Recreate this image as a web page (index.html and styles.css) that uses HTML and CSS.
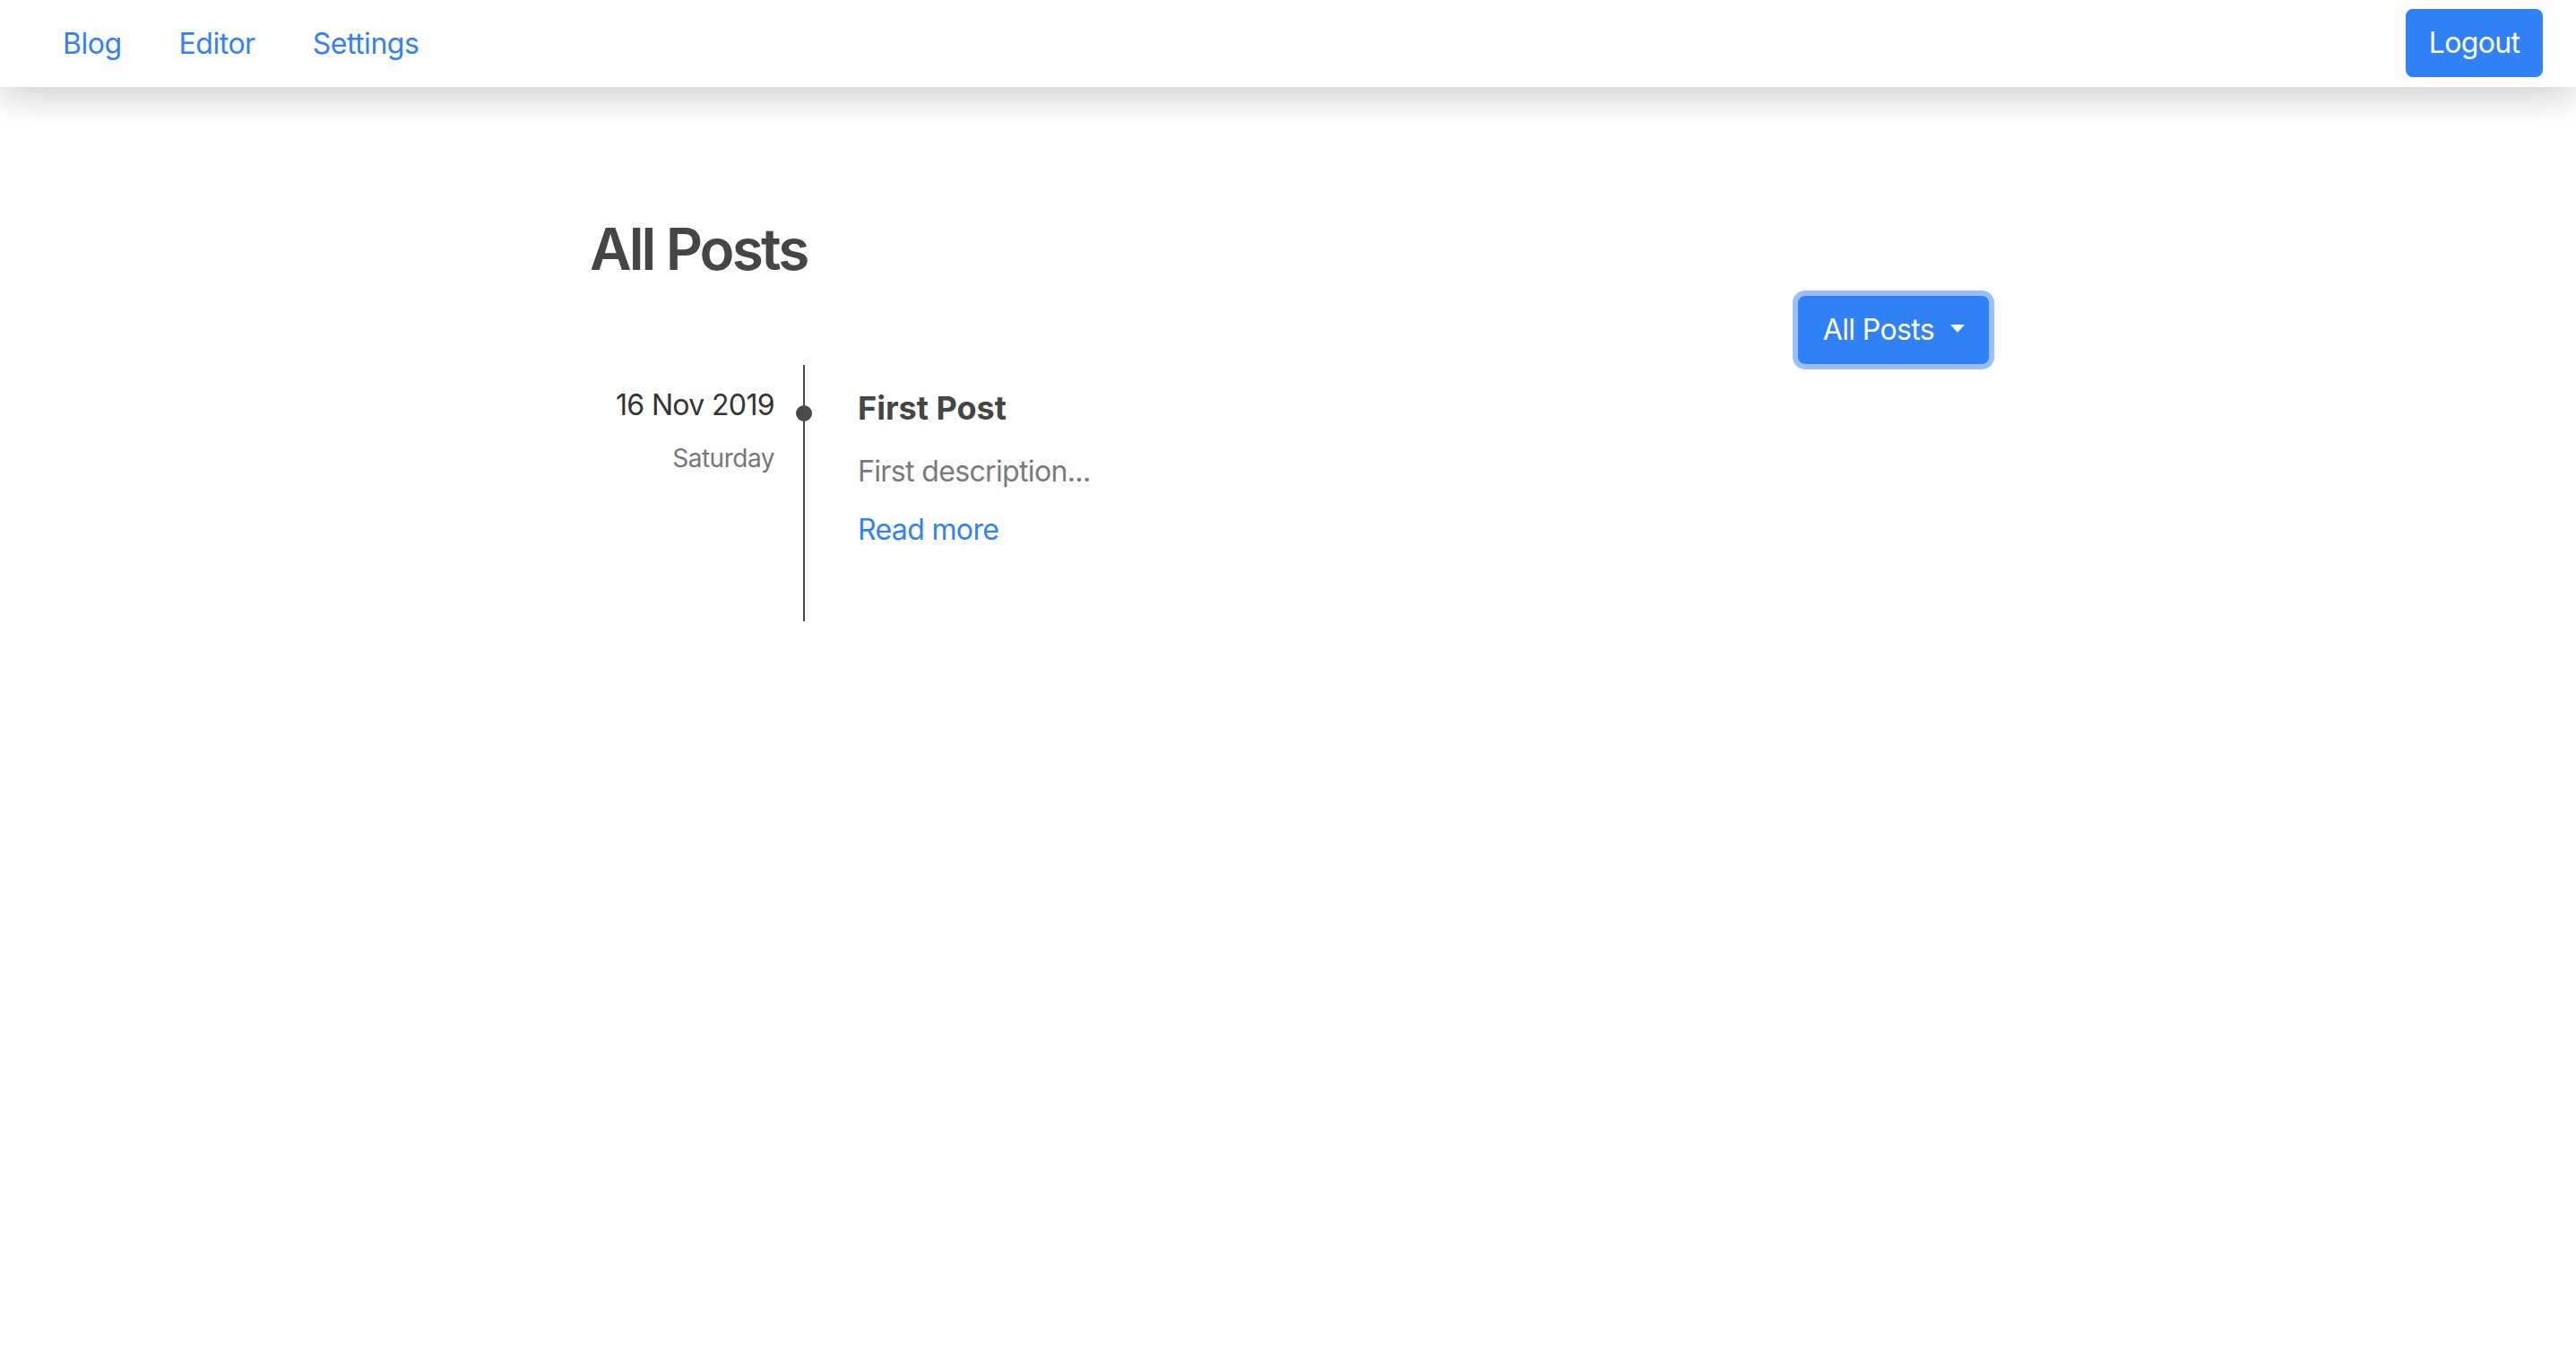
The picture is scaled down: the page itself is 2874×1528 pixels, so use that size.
FILE: index.html
```html
<!DOCTYPE html>
<html lang="en">
<head>
<meta charset="utf-8">
<title>All Posts</title>
<link rel="stylesheet" href="styles.css">
</head>
<body>
<header class="navbar">
  <nav class="nav-links">
    <a class="nav-link" href="#">Blog</a>
    <a class="nav-link" href="#">Editor</a>
    <a class="nav-link" href="#">Settings</a>
  </nav>
  <button class="btn btn-primary logout" type="button">Logout</button>
</header>

<main class="container">
  <h2 class="page-title">All Posts</h2>
  <div class="filter-row">
    <button class="btn btn-primary dropdown-toggle focused" type="button"><span class="btn-label">All Posts</span><span class="caret"></span></button>
  </div>

  <section class="timeline">
    <article class="timeline-item">
      <div class="date-col">
        <div class="date">16 Nov 2019</div>
        <div class="weekday">Saturday</div>
      </div>
      <div class="axis"><span class="dot"></span></div>
      <div class="post">
        <h5 class="post-title">First Post</h5>
        <p class="post-desc">First description...</p>
        <a class="read-more" href="#">Read more</a>
      </div>
    </article>
  </section>
</main>
</body>
</html>
```

FILE: styles.css
```css
* { box-sizing: border-box; }

html, body {
  margin: 0;
  padding: 0;
  background: #ffffff;
}

body {
  font-family: Inter, "Open Sans", "Liberation Sans", sans-serif;
  font-size: 32px;
  line-height: 1.5;
  color: #333333;
  letter-spacing: -0.015em;
}

.navbar {
  height: 97px;
  display: flex;
  align-items: center;
  justify-content: space-between;
  padding: 0 37px 0 38px;
  background: #ffffff;
  box-shadow: 0 10px 40px rgba(0, 0, 0, 0.2);
  position: relative;
  z-index: 1;
}

.nav-links {
  display: flex;
  align-items: center;
}

.nav-link {
  color: #3381f6;
  text-decoration: none;
  padding: 0 32px;
  line-height: 48px;
  font-size: 32px;
}

.btn {
  font-family: inherit;
  font-size: 32px;
  line-height: 48px;
  letter-spacing: -0.02em;
  border: 2px solid transparent;
  border-radius: 8px;
  padding: 12px 25px;
  cursor: pointer;
  white-space: nowrap;
}

.btn-primary {
  background: #3181f6;
  border-color: #3181f6;
  color: #ffffff;
}

.logout {
  height: 76px;
  width: 153px;
  padding: 12px 0;
  margin-top: -1px;
}

.container {
  width: 1558px;
  margin: 0 auto;
  padding-top: 143px;
}

.page-title {
  margin: 0;
  font-size: 64px;
  font-weight: 600;
  line-height: 1.2;
  color: #454545;
  letter-spacing: -0.045em;
}

.filter-row {
  display: flex;
  justify-content: flex-end;
  margin-top: 13px;
}

.dropdown-toggle {
  height: 76px;
  display: inline-flex;
  align-items: center;
  padding: 12px 25px 12px 26px;
  margin-right: -3px;
}

.btn-label {
  display: inline-block;
}

.focused {
  box-shadow: 0 0 0 6px rgba(49, 129, 246, 0.5);
}

.caret {
  display: inline-block;
  width: 0;
  height: 0;
  margin-left: 18px;
  margin-top: -2px;
  border-top: 9px solid #ffffff;
  border-left: 8px solid transparent;
  border-right: 8px solid transparent;
}

.timeline {
  margin-top: 1px;
}

.timeline-item {
  display: flex;
  align-items: stretch;
}

.date-col {
  width: 206px;
  text-align: right;
  padding-top: 20px;
}

.date {
  font-size: 32px;
  line-height: 50px;
  color: #333333;
  letter-spacing: -0.02em;
}

.weekday {
  font-size: 28px;
  line-height: 42px;
  color: #777777;
  margin-top: 13px;
}

.axis {
  position: relative;
  width: 2px;
  background: #4a4a4a;
  margin: 0 59px 0 32px;
}

.dot {
  position: absolute;
  top: 45px;
  left: -8px;
  width: 18px;
  height: 18px;
  border-radius: 50%;
  background: #4a4a4a;
}

.post {
  padding: 27px 0 78px 0;
}

.post-title {
  margin: 0;
  font-size: 36px;
  line-height: 1.2;
  font-weight: 700;
  color: #454545;
  letter-spacing: 0;
}

.post-desc {
  margin: 25px 0 0 0;
  font-size: 32px;
  line-height: 48px;
  color: #7a7a7a;
  letter-spacing: -0.02em;
}

.read-more {
  display: block;
  margin-top: 17px;
  font-size: 32px;
  line-height: 48px;
  color: #3381f6;
  text-decoration: none;
  letter-spacing: -0.02em;
}
```
